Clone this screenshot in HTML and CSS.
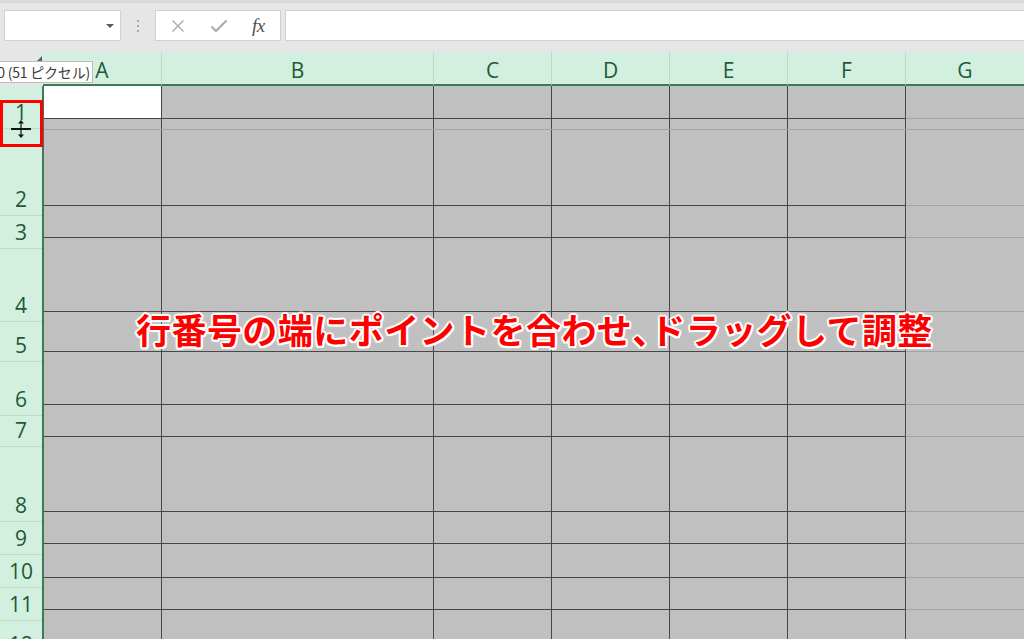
FILE: index.html
```html
<!DOCTYPE html>
<html lang="ja">
<head>
<meta charset="utf-8">
<title>Excel row height</title>
<link rel="stylesheet" href="styles.css">
</head>
<body>
<div class="app">
  <div class="toolbar">
    <div class="namebox"><span class="caret"></span></div>
    <div class="grip"><i></i><i></i><i></i></div>
    <div class="fxbtns">
      <svg class="ico" width="14" height="14" viewBox="0 0 14 14"><path d="M1.5 1.5 L12.5 12.5 M12.5 1.5 L1.5 12.5" stroke="#a9a9a9" stroke-width="1.4" fill="none"/></svg>
      <svg class="ico" width="18" height="14" viewBox="0 0 18 14"><path d="M1.5 7.5 L6 12 L16.5 1.5" stroke="#a9a9a9" stroke-width="2" fill="none"/></svg>
      <span class="fx">fx</span>
    </div>
    <div class="formula"></div>
  </div>

  <div class="colheads">
    <div class="corner"><span class="tri"></span></div>
    <div class="ch cA">A</div>
    <div class="ch cB">B</div>
    <div class="ch cN">C</div>
    <div class="ch cN">D</div>
    <div class="ch cN">E</div>
    <div class="ch cN">F</div>
    <div class="ch cG">G</div>
  </div>

  <div class="body">
    <div class="rowheads">
      <div class="rh r1">1</div>
      <div class="rh r2">2</div>
      <div class="rh r3">3</div>
      <div class="rh r4">4</div>
      <div class="rh r5">5</div>
      <div class="rh r6">6</div>
      <div class="rh r7">7</div>
      <div class="rh r8">8</div>
      <div class="rh r9">9</div>
      <div class="rh r10">10</div>
      <div class="rh r11">11</div>
      <div class="rh r12">12</div>
    </div>
    <div class="cells">
      <div class="c active"></div><div class="c"></div><div class="c"></div><div class="c"></div><div class="c"></div><div class="c"></div><div class="c g"></div>
      <div class="c"></div><div class="c"></div><div class="c"></div><div class="c"></div><div class="c"></div><div class="c"></div><div class="c g"></div>
      <div class="c"></div><div class="c"></div><div class="c"></div><div class="c"></div><div class="c"></div><div class="c"></div><div class="c g"></div>
      <div class="c"></div><div class="c"></div><div class="c"></div><div class="c"></div><div class="c"></div><div class="c"></div><div class="c g"></div>
      <div class="c"></div><div class="c"></div><div class="c"></div><div class="c"></div><div class="c"></div><div class="c"></div><div class="c g"></div>
      <div class="c"></div><div class="c"></div><div class="c"></div><div class="c"></div><div class="c"></div><div class="c"></div><div class="c g"></div>
      <div class="c"></div><div class="c"></div><div class="c"></div><div class="c"></div><div class="c"></div><div class="c"></div><div class="c g"></div>
      <div class="c"></div><div class="c"></div><div class="c"></div><div class="c"></div><div class="c"></div><div class="c"></div><div class="c g"></div>
      <div class="c"></div><div class="c"></div><div class="c"></div><div class="c"></div><div class="c"></div><div class="c"></div><div class="c g"></div>
      <div class="c"></div><div class="c"></div><div class="c"></div><div class="c"></div><div class="c"></div><div class="c"></div><div class="c g"></div>
      <div class="c"></div><div class="c"></div><div class="c"></div><div class="c"></div><div class="c"></div><div class="c"></div><div class="c g"></div>
      <div class="c"></div><div class="c"></div><div class="c"></div><div class="c"></div><div class="c"></div><div class="c"></div><div class="c g"></div>
    </div>
  </div>

  <div class="dragline"></div>
  <div class="tooltip">0 (51 ピクセル)</div>
  <div class="redbox"></div>
  <svg class="cursor" width="24" height="20" viewBox="0 0 24 20">
    <path d="M1 10 H21" stroke="#111" stroke-width="2"/>
    <path d="M11 3 V17" stroke="#111" stroke-width="1.2"/>
    <path d="M8 4.5 L11 1 L14 4.5 Z M8 15.5 L11 19 L14 15.5 Z" fill="#111"/>
  </svg>
  <div class="caption">行番号の端にポイントを合わせ、ドラッグして調整</div>
</div>
</body>
</html>
```

FILE: styles.css
```css
* { box-sizing: border-box; }
html, body { margin: 0; padding: 0; }
body { width: 1024px; height: 639px; overflow: hidden; background: #e6e6e6; font-family: "Open Sans", "Noto Sans", sans-serif; }

.app { position: relative; width: 1024px; height: 639px; overflow: hidden; background: #e6e6e6; }

/* toolbar */
.toolbar { height: 52px; border-top: 3px solid #d9d9d9; padding-top: 7px; display: flex; align-items: flex-start; }
.namebox { margin-left: 4px; width: 117px; height: 31px; background: #fff; border: 1px solid #d0d0d0; display: flex; align-items: center; justify-content: flex-end; padding-right: 6px; }
.caret { width: 0; height: 0; border-left: 4px solid transparent; border-right: 4px solid transparent; border-top: 4px solid #5a5a5a; }
.grip { width: 34px; height: 31px; display: flex; flex-direction: column; align-items: center; justify-content: center; gap: 3px; }
.grip i { display: block; width: 2px; height: 2px; background: #a8a8a8; }
.fxbtns { width: 126px; height: 31px; background: #fff; border: 1px solid #d0d0d0; display: flex; align-items: center; padding-left: 15px; }
.fxbtns .ico { display: block; }
.fxbtns .ico + .ico { margin-left: 25px; }
.fx { margin-left: 24px; font-family: "Liberation Serif", serif; font-style: italic; font-size: 19px; color: #505050; line-height: 1; letter-spacing: -0.5px; }
.formula { margin-left: 4px; flex: 1; margin-right: -4px; height: 31px; background: #fff; border: 1px solid #d0d0d0; }

/* column headers */
.colheads { height: 34px; display: flex; }
.corner { width: 43px; background: #e6e6e6; display: flex; justify-content: flex-end; align-items: flex-start; padding: 4px 1px 0 0; }
.tri { width: 0; height: 0; border-left: 6px solid transparent; border-bottom: 6px solid #4a6b58; }
.ch { background: #d2efdf; border-bottom: 2px solid #3f7a57; border-right: 1px solid #b7dbc5; color: #1e5a34; font-size: 21px; line-height: 32px; text-align: center; padding-top: 2px; }
.cA { width: 119px; }
.cB { width: 272px; }
.cN { width: 118px; }
.cG { flex: 1; border-right: none; }

/* body */
.body { display: flex; }
.rowheads { width: 44px; border-right: 2px solid #3f7a57; background: #d2efdf; display: flex; flex-direction: column; }
.rh { border-bottom: 1px solid #bcdcc8; color: #1e5a34; font-size: 21px; line-height: 22px; text-align: center; display: flex; align-items: flex-end; justify-content: center; padding-bottom: 5px; }
.r1 { height: 43px; }
.r2 { height: 87px; }
.r3 { height: 33px; }
.r4 { height: 73px; }
.r5 { height: 40px; }
.r6 { height: 54px; }
.r7 { height: 31px; }
.r8 { height: 75px; }
.r9 { height: 33px; }
.r10 { height: 33px; }
.r11 { height: 33px; }
.r12 { height: 40px; }

.cells { flex: 1; display: grid; grid-template-columns: 118px 272px 118px 118px 118px 118px 1fr; grid-template-rows: 33px 87px 32px 74px 40px 53px 32px 75px 32px 34px 32px 40px; background: #c0c0c0; }
.c { border-right: 1px solid #474747; border-bottom: 1px solid #474747; background: #c0c0c0; }
.c.g { border-right: none; border-bottom-color: #a3a3a3; }
.c.active { background: #fff; }

/* overlays */
.dragline { position: absolute; left: 44px; right: 0; top: 129px; height: 1px; background: #a4a4a4; }
.tooltip { position: absolute; left: -5px; top: 61px; width: 98px; height: 22px; background: #fff; border: 1px solid #bdbdbd; font-family: "Noto Sans CJK JP", sans-serif; font-size: 14px; line-height: 20px; color: #3c3c3c; text-align: right; padding-right: 2px; white-space: nowrap; letter-spacing: -0.2px; }
.redbox { position: absolute; left: 0; top: 100px; width: 43px; height: 47px; border: 3px solid #ff0000; }
.cursor { position: absolute; left: 10px; top: 119px; }
.caption { position: absolute; left: 136px; top: 311px; font-family: "Noto Sans CJK JP", sans-serif; font-weight: 700; font-size: 35px; line-height: 35px; color: #ff0000; white-space: nowrap; font-feature-settings: "halt"; letter-spacing: 0.45px;
  text-shadow: 2px 0 0 #fff, -2px 0 0 #fff, 0 2px 0 #fff, 0 -2px 0 #fff, 1.5px 1.5px 0 #fff, -1.5px 1.5px 0 #fff, 1.5px -1.5px 0 #fff, -1.5px -1.5px 0 #fff, 0 0 4px rgba(255,255,255,0.8); }
```
